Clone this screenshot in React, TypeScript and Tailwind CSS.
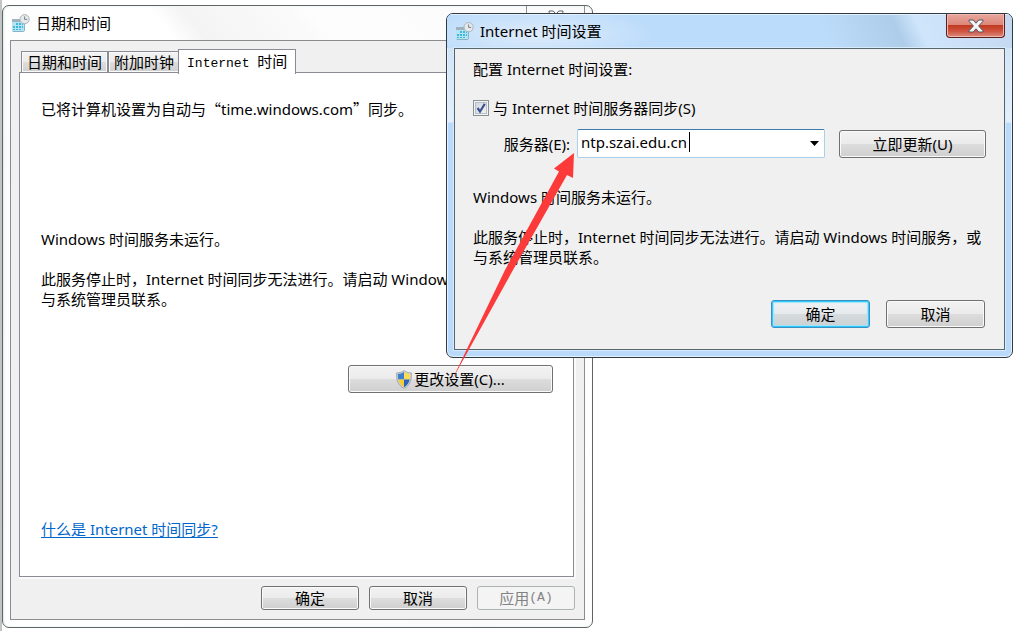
import { useState, type ButtonHTMLAttributes, type ReactNode } from "react";
import clsx from "clsx";

const UI_FONT = "font-['Noto_Sans','Noto_Sans_CJK_SC',sans-serif]";
const CLASSIC_FONT = "font-['Noto_Sans_CJK_SC',sans-serif]";
const CLASSIC_LATIN = "font-['Liberation_Mono',monospace] text-[13px]";

type ButtonProps = ButtonHTMLAttributes<HTMLButtonElement> & {
  primary?: boolean;
};

function AeroButton({ primary, disabled, className, ...rest }: ButtonProps) {
  return (
    <button
      type="button"
      disabled={disabled}
      className={clsx(
        "flex shrink-0 items-center justify-center rounded-[3px] border text-[15px] leading-5 whitespace-nowrap",
        disabled && "border-[#adb2b5] bg-[#f4f4f4] text-[#838383]",
        !disabled && "text-black",
        !disabled &&
          !primary &&
          "border-[#707070] bg-[linear-gradient(#f2f2f2,#ebebeb_50%,#dddddd_50%,#cfcfcf)] shadow-[inset_0_0_0_1px_#fafafa]",
        primary &&
          "border-[#3c8fc4] bg-[linear-gradient(#f0f2f3,#e6eaec_50%,#d6dbde_50%,#cbd0d3)] shadow-[inset_0_0_0_1px_#2fcbfb,inset_0_0_1px_2px_#9fe4fa]",
        className,
      )}
      {...rest}
    />
  );
}

function ClockIcon({ className }: { className?: string }) {
  return (
    <svg viewBox="0 0 18 18" className={clsx("h-[18px] w-[18px] shrink-0", className)} aria-hidden="true">
      <path d="M11.500 6.500l1.500 1v9l-1.500 1.500H1l-1-1.500z" fill="#86b4c6" />
      <rect x="0" y="5" width="12" height="12" fill="#b4e3f1" />
      <rect x="0" y="5" width="12" height="3" fill="#9fb3bd" />
      <g fill="#3fb6dc">
        <rect x="4" y="9" width="2" height="2" />
        <rect x="7" y="9" width="2" height="2" />
        <rect x="10" y="9" width="1" height="2" />
        <rect x="1" y="12" width="2" height="2" />
        <rect x="4" y="12" width="2" height="2" />
        <rect x="7" y="12" width="2" height="2" />
        <rect x="10" y="12" width="1" height="2" />
        <rect x="1" y="15" width="2" height="1" />
        <rect x="4" y="15" width="2" height="1" />
        <rect x="7" y="15" width="2" height="1" />
      </g>
      <circle cx="12.6" cy="5.2" r="4.6" fill="#e6eaed" stroke="#aab2b8" />
      <path d="M12.600 2.400v3h2.600" fill="none" stroke="#74808a" />
    </svg>
  );
}

function ShieldIcon() {
  return (
    <svg viewBox="0 0 16 19" className="h-[19px] w-4 shrink-0" aria-hidden="true">
      <path
        d="M8 0.500C6 2.200 3.400 2.800 0.600 2.900c-.5 7.200 1.500 12.600 7.400 15.500 5.900-2.900 7.900-8.300 7.400-15.500C12.600 2.800 10 2.200 8 .5z"
        fill="#c9cfd4"
        stroke="#9aa3aa"
        strokeWidth="0.8"
      />
      <path d="M8 2C6.300 3.300 4.300 3.900 1.900 4c-.1 1.900 0 3.800.4 5.500H8z" fill="#3c7fd0" />
      <path d="M8 2c1.700 1.300 3.700 1.900 6.100 2 .1 1.900 0 3.800-.4 5.500H8z" fill="#fbdc55" />
      <path d="M8 9.500H2.300C3.200 13 5 15.600 8 17.200z" fill="#f5cb38" />
      <path d="M8 9.500h5.700C12.800 13 11 15.600 8 17.200z" fill="#2a63b8" />
    </svg>
  );
}

function CloseGlyph({ fill, stroke }: { fill: string; stroke: string }) {
  return (
    <svg viewBox="0 0 16 14" className="h-3.5 w-4" aria-hidden="true">
      <path
        d="M1 1h4.300L8 4.200 10.700 1H15v1.200L10.600 7 15 11.800V13h-4.300L8 9.800 5.300 13H1v-1.200L5.400 7 1 2.200z"
        fill={fill}
        stroke={stroke}
        strokeLinejoin="round"
      />
    </svg>
  );
}

function Tab({ active, children }: { active?: boolean; children: ReactNode }) {
  return (
    <button
      type="button"
      role="tab"
      aria-selected={!!active}
      className={clsx(
        "-mb-px border border-[#898c95] text-[15px] leading-5 whitespace-nowrap",
        active
          ? "relative z-10 -ml-0.5 h-[25px] border-b-0 bg-white px-2"
          : "h-[22px] self-end bg-[linear-gradient(#f3f3f3,#ebebeb_50%,#dddddd_50%,#d0d0d0)] px-[5px] shadow-[inset_0_0_0_1px_#fafafa]",
      )}
    >
      {children}
    </button>
  );
}

function ServiceStatus({ className }: { className?: string }) {
  return (
    <div className={className}>
      <p>Windows 时间服务未运行。</p>
      <p className="mt-5 whitespace-nowrap">
        此服务停止时，Internet 时间同步无法进行。请启动 Windows 时间服务，或
        <br />
        与系统管理员联系。
      </p>
    </div>
  );
}

function DateTimeWindow() {
  return (
    <section
      aria-label="日期和时间"
      className="overflow-hidden rounded-[7px] border border-[#5f6566] bg-[linear-gradient(45deg,#fff_0%,#fbfbfb_40%,#fff_60%,#fafafa_100%)] px-[7px] pb-[7px] shadow-[inset_1px_0_2px_#d7ecea]"
    >
      <header className="-mx-[7px] flex h-[34px] items-start bg-[linear-gradient(50deg,transparent_28%,#f4f4f4_33%,#fafafa_50%,transparent_54%)] pr-[7px] pl-[9px]">
        <ClockIcon className="mt-2" />
        <h1 className="mt-[7px] ml-1.5 flex-1 text-[15px] leading-5">日期和时间</h1>
        <button
          type="button"
          aria-label="关闭"
          className="flex h-[18px] w-[59px] justify-center border-x border-b border-[#8d9294] pt-1"
        >
          <CloseGlyph fill="#fff" stroke="#5d6165" />
        </button>
      </header>

      <div className="border border-[#8a8d8f] bg-[#f0f0f0] pt-2 pr-[9px] pb-[9px] pl-2">
        <div role="tablist" className={clsx("flex h-[23px] pl-0.5", CLASSIC_FONT)}>
          <Tab>日期和时间</Tab>
          <Tab>附加时钟</Tab>
          <Tab active>
            <span className={CLASSIC_LATIN}>Internet </span>时间
          </Tab>
        </div>

        <div
          role="tabpanel"
          className="mr-px border border-[#898c95] bg-white px-5 pt-[26px] pb-[37px] pl-[21px] shadow-[1px_1px_0_1px_#fafafa]"
        >
          <p>
            已将计算机设置为自动与<span className={CLASSIC_FONT}>“</span>
            time.windows.com<span className={CLASSIC_FONT}>”</span>同步。
          </p>
          <ServiceStatus className="mt-[110px]" />
          <AeroButton className="mt-14 ml-auto h-7 w-[205px] gap-0.5">
            <ShieldIcon />
            更改设置(C)...
          </AeroButton>
          <a href="#sync" className="mt-[126px] block w-max text-[#0066cc] underline underline-offset-2">
            什么是 Internet 时间同步?
          </a>
        </div>

        <div className={clsx("mt-[9px] flex justify-end gap-2.5", CLASSIC_FONT)}>
          <AeroButton className="h-6 w-[98px]">确定</AeroButton>
          <AeroButton className="h-6 w-[98px]">取消</AeroButton>
          <AeroButton className="h-6 w-[98px]" disabled>
            应用<span className={CLASSIC_LATIN}>(A)</span>
          </AeroButton>
        </div>
      </div>
    </section>
  );
}

function InternetTimeDialog() {
  const [sync, setSync] = useState(true);
  const [server, setServer] = useState("ntp.szai.edu.cn");

  return (
    <section
      role="dialog"
      aria-label="Internet 时间设置"
      className="absolute top-[13px] right-[5px] left-[446px] overflow-hidden rounded-[7px] border border-[#2f3a45] bg-[linear-gradient(#c9dff5_0,#e3f0fb_108px,#b9dafb_109px,#b9dafb_100%)] px-[7px] pb-[7px] shadow-[inset_0_0_0_1px_#e4f2fe]"
    >
      <header className="-mx-[7px] flex h-[34px] items-start bg-[radial-gradient(ellipse_120px_26px_at_90px_20px,#dfecfa,transparent),linear-gradient(65deg,#bcdcfb_0,#bcdcfb_66%,#aecde9_79%,#cfe5fc_83%,#cadff5_92%,#c3d8f0_100%)] pr-[7px] pl-[9px] shadow-[inset_0_1px_0_#e4f2fe]">
        <ClockIcon className="mt-2" />
        <h2 className="mt-[7px] ml-1.5 flex-1 text-[15px] leading-5">Internet 时间设置</h2>
        <button
          type="button"
          aria-label="关闭"
          className="flex h-6 w-[59px] items-center justify-center rounded-b-[4px] border border-t-0 border-[#5a1f1c] bg-[linear-gradient(#e8a79e,#dd8679_48%,#c13a22_50%,#cf5540_75%,#dc8b80)] shadow-[inset_0_0_0_1px_#f0b9b0]"
        >
          <CloseGlyph fill="#f5f5f5" stroke="#535666" />
        </button>
      </header>

      <div className="border border-[#57656f] bg-[#f0f0f0] px-[18px] pt-2.5 pb-[21px] shadow-[0_0_0_1px_#d8ebfd]">
        <p>配置 Internet 时间设置:</p>

        <label className="mt-[19px] flex w-max items-center gap-1">
          <input
            type="checkbox"
            checked={sync}
            onChange={(e) => setSync(e.target.checked)}
            className="peer sr-only"
          />
          <span className="flex h-4 w-4 items-center justify-center border border-[#8e8f8f] bg-[linear-gradient(135deg,#cdd2d9,#f6f6f6)] shadow-[inset_0_0_0_1px_#f4f4f4,inset_0_0_0_2px_#b9bfc8]">
            {sync && (
              <svg viewBox="0 0 12 12" className="h-3 w-3" aria-hidden="true">
                <path d="M2.500 6l2.500 3.500L9.800 1.800" fill="none" stroke="#3d5493" strokeWidth="2.200" />
              </svg>
            )}
          </span>
          与 Internet 时间服务器同步(S)
        </label>

        <div className="mt-[11px] flex items-end">
          <label htmlFor="server" className="w-[104px] shrink-0 pr-[7px] pb-1 text-right">
            服务器(E):
          </label>
          <div className="relative flex h-[29px] min-w-0 flex-1 items-center rounded-[2px] border border-[#a9cfea] border-t-[#3d7bad] bg-white">
            <input
              id="server"
              type="text"
              value={server}
              onChange={(e) => setServer(e.target.value)}
              className="min-w-0 flex-1 pb-1 pl-[3px] leading-5 outline-none"
            />
            <button type="button" aria-label="服务器列表" className="flex h-full w-5 items-center justify-center">
              <svg viewBox="0 0 9 5" className="h-[5px] w-[9px]" aria-hidden="true">
                <path d="M0 0h9L4.500 5z" />
              </svg>
            </button>
            <span className="absolute top-0.5 left-[111px] h-5 w-px bg-black" />
          </div>
          <AeroButton className="ml-3.5 h-7 w-[147px]">立即更新(U)</AeroButton>
        </div>

        <ServiceStatus className="mt-[29px]" />

        <div className="mt-[33px] flex justify-end gap-4 pr-px">
          <AeroButton className="h-7 w-[99px]" primary>
            确定
          </AeroButton>
          <AeroButton className="h-7 w-[99px]">取消</AeroButton>
        </div>
      </div>
    </section>
  );
}

export default function App() {
  return (
    <main
      className={clsx(
        "relative min-h-screen border-l-2 border-[#c3c3c3] bg-white pt-[5px] pr-[425px] text-[15px] leading-5 text-black",
        UI_FONT,
      )}
    >
      <DateTimeWindow />
      {/* the dialog is offset from the 2px edge on the left */}
      <div className="absolute inset-y-0 right-0 -left-0.5">
        <InternetTimeDialog />
        {/* Red pointer from the settings button to the server box */}
        <svg
          viewBox="0 0 124 228"
          className="pointer-events-none absolute top-[153px] left-[451px] h-[228px] w-[124px]"
          aria-hidden="true"
        >
          <path d="M123 0L103 15.500l5 3L54 117 1 227l61-110L116 22l6 3z" fill="#fc3a3a" />
        </svg>
      </div>
    </main>
  );
}
